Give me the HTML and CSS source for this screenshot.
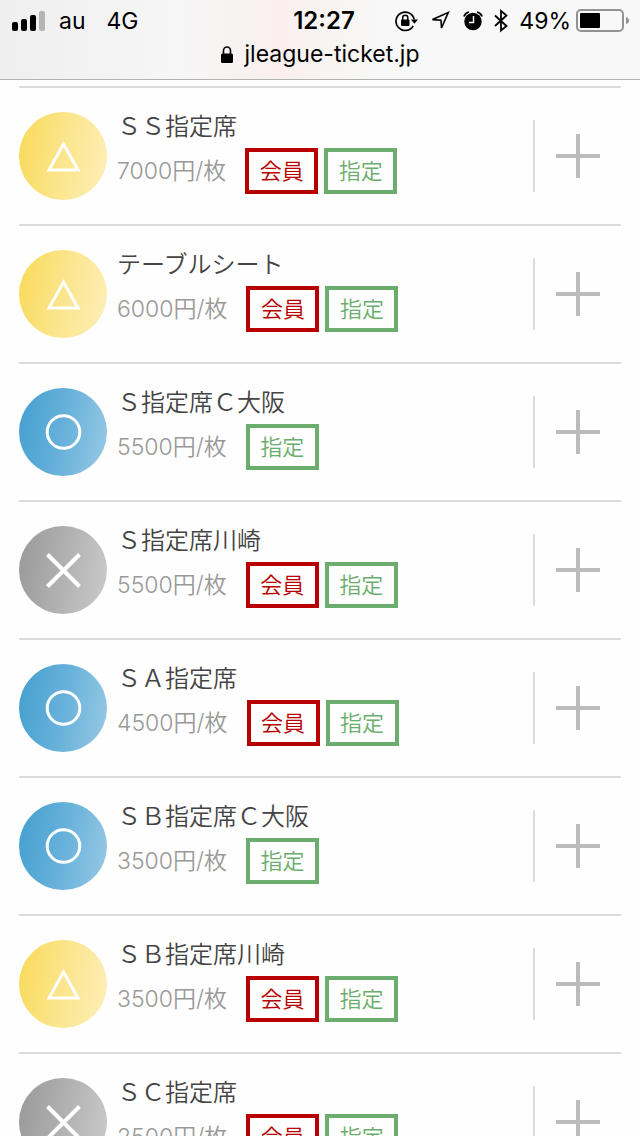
FILE: index.html
```html
<!DOCTYPE html>
<html lang="ja">
<head>
<meta charset="utf-8">
<meta name="viewport" content="width=device-width">
<title>jleague-ticket.jp</title>
<link rel="stylesheet" href="styles.css">
</head>
<body>
<svg class="defs" aria-hidden="true">
  <symbol id="few" viewBox="0 0 44 44"><path d="M22.500 10 37 36H8Z"/></symbol>
  <symbol id="open" viewBox="0 0 44 44"><circle cx="22.500" cy="22" r="16.300"/></symbol>
  <symbol id="sold" viewBox="0 0 44 44"><path class="bold" d="M6.500 6.500 38.500 38.500M38.500 6.500 6.500 38.500"/></symbol>
</svg>
<header class="chrome">
  <div class="status">
    <div class="side">
      <svg class="signal" width="34" height="20" viewBox="0 0 34 20"><rect y="11" width="6" height="9" rx="2"/><rect x="9" y="8" width="6" height="12" rx="2"/><rect x="18" y="4" width="6" height="16" rx="2"/><rect x="27" width="6" height="20" rx="2" fill="#b4b4b4"/></svg>
      <span class="carrier">au</span>
      <span>4G</span>
    </div>
    <time class="clock">12:27</time>
    <div class="side right">
      <svg class="lock" width="23" height="22" viewBox="0 0 23 22"><path d="M18.200 15.800A9.200 9.200 0 1 1 19.200 9.500" fill="none" stroke="#000" stroke-width="1.700"/><path d="M15.800 9.500h7.200l-3.600 4.300z"/><rect x="6" y="9.500" width="8.500" height="6.500" rx="1"/><path d="M7.700 10V7.800a2.550 2.550 0 0 1 5.100 0V10" fill="none" stroke="#000" stroke-width="1.500"/></svg>
      <svg class="arrow" width="20" height="20" viewBox="0 0 20 20"><path d="M18.200 1.600 11.500 17 11 9.300 2.500 8.600Z" fill="none" stroke="#000" stroke-width="1.600"/></svg>
      <svg width="20" height="20" viewBox="0 0 20 20"><circle cx="10" cy="10.500" r="8.700"/><path d="M1 5.500Q2 2 6 1M14 1Q18 2 19 5.500" fill="none" stroke="#000" stroke-width="1.800"/><path d="M10.500 5V11.500H6" fill="none" stroke="#fff" stroke-width="1.500"/></svg>
      <svg class="bluetooth" width="14" height="24" viewBox="0 0 14 24"><path d="M1 6.500 12.500 17 7 21.500V2L12.500 6.500 1 17" fill="none" stroke="#000" stroke-width="1.800"/></svg>
      <span>49%</span>
      <svg class="battery" width="53" height="24" viewBox="0 0 53 24"><rect x="1" y="1" width="46" height="21" rx="4" fill="none" stroke="#929292" stroke-width="2"/><rect x="4" y="4" width="20" height="15" rx="1"/><path d="M50 8q3 1 3 3.500T50 15z" fill="#929292"/></svg>
    </div>
  </div>
  <div class="address">
    <svg width="12" height="17" viewBox="0 0 12 17"><rect y="7.500" width="12" height="9.500" rx="1.500"/><path d="M2.500 8V4.500a3.500 3.500 0 0 1 7 0V8" fill="none" stroke="#000" stroke-width="1.600"/></svg>
    <span>jleague-ticket.jp</span>
  </div>
</header>
<main class="page">
  <ul class="seats">
    <li class="seat">
      <span class="mark few"><svg><use href="#few"/></svg></span>
      <div class="info"><h2 class="name">ＳＳ指定席</h2><div class="detail"><span class="price">7000円/枚</span><span class="tag member">会員</span><span class="tag">指定</span></div></div>
      <button class="add" aria-label="ＳＳ指定席"></button>
    </li>
    <li class="seat">
      <span class="mark few"><svg><use href="#few"/></svg></span>
      <div class="info"><h2 class="name">テーブルシート</h2><div class="detail"><span class="price">6000円/枚</span><span class="tag member">会員</span><span class="tag">指定</span></div></div>
      <button class="add" aria-label="テーブルシート"></button>
    </li>
    <li class="seat">
      <span class="mark open"><svg><use href="#open"/></svg></span>
      <div class="info"><h2 class="name">Ｓ指定席Ｃ大阪</h2><div class="detail"><span class="price">5500円/枚</span><span class="tag">指定</span></div></div>
      <button class="add" aria-label="Ｓ指定席Ｃ大阪"></button>
    </li>
    <li class="seat">
      <span class="mark sold"><svg><use href="#sold"/></svg></span>
      <div class="info"><h2 class="name">Ｓ指定席川崎</h2><div class="detail"><span class="price">5500円/枚</span><span class="tag member">会員</span><span class="tag">指定</span></div></div>
      <button class="add" aria-label="Ｓ指定席川崎"></button>
    </li>
    <li class="seat">
      <span class="mark open"><svg><use href="#open"/></svg></span>
      <div class="info"><h2 class="name">ＳＡ指定席</h2><div class="detail"><span class="price">4500円/枚</span><span class="tag member">会員</span><span class="tag">指定</span></div></div>
      <button class="add" aria-label="ＳＡ指定席"></button>
    </li>
    <li class="seat">
      <span class="mark open"><svg><use href="#open"/></svg></span>
      <div class="info"><h2 class="name">ＳＢ指定席Ｃ大阪</h2><div class="detail"><span class="price">3500円/枚</span><span class="tag">指定</span></div></div>
      <button class="add" aria-label="ＳＢ指定席Ｃ大阪"></button>
    </li>
    <li class="seat">
      <span class="mark few"><svg><use href="#few"/></svg></span>
      <div class="info"><h2 class="name">ＳＢ指定席川崎</h2><div class="detail"><span class="price">3500円/枚</span><span class="tag member">会員</span><span class="tag">指定</span></div></div>
      <button class="add" aria-label="ＳＢ指定席川崎"></button>
    </li>
    <li class="seat">
      <span class="mark sold"><svg><use href="#sold"/></svg></span>
      <div class="info"><h2 class="name">ＳＣ指定席</h2><div class="detail"><span class="price">2500円/枚</span><span class="tag member">会員</span><span class="tag">指定</span></div></div>
      <button class="add" aria-label="ＳＣ指定席"></button>
    </li>
  </ul>
</main>
</body>
</html>
```

FILE: styles.css
```css
* { box-sizing: border-box; }
body {
  margin: 0;
  height: 100vh;
  display: flex;
  flex-direction: column;
  overflow: hidden;
  background: #fefefe;
  font-family: Inter, "Noto Sans CJK JP", sans-serif;
}
svg { display: block; flex: none; }
.defs { position: absolute; width: 0; height: 0; }

.chrome {
  flex: none;
  padding: 6px 12px;
  border-bottom: 1px solid #b2b2b2;
  background: linear-gradient(90deg, #efefef 0%, #f6f6f6 28%, #f7f3f2 36%, #faefee 44%, #f7f5f3 52%, #f8f8f8 60%, #f8f8f8 100%);
  color: #000;
  font-size: 23px;
}
.status {
  display: grid;
  grid-template-columns: 1fr auto 1fr;
  align-items: center;
  height: 30px;
  line-height: 30px;
}
.side { display: flex; align-items: center; }
.right { justify-content: flex-end; gap: 11px; margin-right: -1px; }
.signal { margin-right: 13px; }
.carrier { margin-right: 21px; }
.clock { padding-left: 8px; font-size: 24px; font-weight: 600; }
.lock { margin-right: 1px; }
.arrow { margin-right: 2px; }
.battery { margin-left: -6px; }
.address {
  display: flex;
  justify-content: center;
  align-items: center;
  gap: 12px;
  height: 37px;
  line-height: 37px;
}

.page { flex: 1; min-height: 0; overflow: hidden; padding: 6px 19px 0; }
.seats { margin: 0; padding: 0; list-style: none; }
.seat {
  display: flex;
  align-items: center;
  height: 138px;
  border-top: 2px solid #dcdcdc;
}
.mark {
  display: grid;
  place-items: center;
  flex: none;
  width: 88px;
  height: 88px;
  margin-right: 10px;
  border-radius: 50%;
}
.mark svg { width: 44px; height: 44px; fill: none; stroke: #fff; stroke-width: 3; }
.mark .bold, .sold svg { stroke-width: 4; }
.few { background: linear-gradient(100deg, #f8da57, #fbe58d 50%, #fdefb9); }
.open { background: linear-gradient(100deg, #439fcf, #67b1da 50%, #99cae5); }
.sold { background: linear-gradient(100deg, #989898, #b1b1b1 50%, #cbcbcb); }
.info { flex: 1; align-self: flex-start; padding-top: 20px; }
.name {
  margin: 0;
  height: 40px;
  line-height: 38px;
  color: #444;
  font-size: 24px;
  font-weight: 350;
}
.detail { display: flex; align-items: center; gap: 6px; height: 46px; font-weight: 350; }
.price { margin-right: 13px; color: #999; font-size: 23px; line-height: 46px; }
.tag {
  min-width: 73px;
  padding: 0 10px;
  border: 4px solid #6aad6c;
  color: #6aad6c;
  font-size: 22px;
  line-height: 38px;
  text-align: center;
}
.member { border-color: #b80000; color: #b80000; }
.add {
  flex: none;
  width: 88px;
  height: 72px;
  padding: 0;
  border: 0;
  border-left: 2px solid #dcdcdc;
  background:
    linear-gradient(#bbb, #bbb) center / 44px 4px no-repeat,
    linear-gradient(#bbb, #bbb) center / 4px 44px no-repeat;
}
```
